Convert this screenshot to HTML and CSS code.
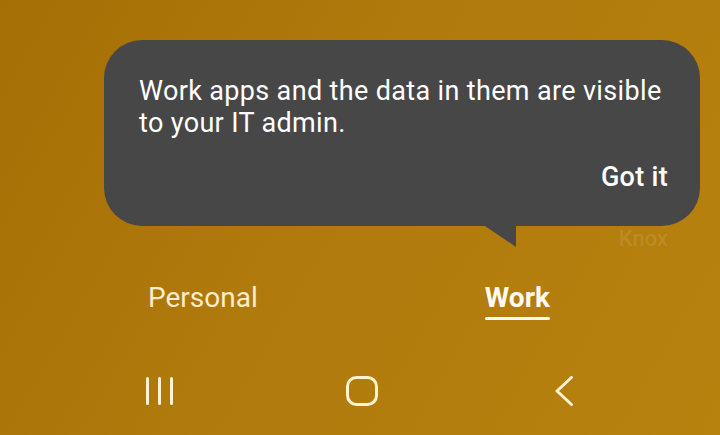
FILE: index.html
```html
<!DOCTYPE html>
<html lang="en">
<head>
    <meta charset="UTF-8">
    <meta name="viewport" content="width=device-width, initial-scale=1.0">
    <title>Work profile</title>
    <link rel="stylesheet" href="styles.css">
</head>
<body>
    <div class="screen">
        <div class="tip">
            <div class="bubble">
                <p class="msg">Work apps and the data in them are visible to your IT admin.</p>
                <div class="actions">
                    <span class="got">Got it</span>
                </div>
            </div>
            <div class="tipFoot">
                <span class="knox">Knox</span>
            </div>
        </div>

        <div class="tabs">
            <div class="tab">Personal</div>
            <div class="tab active">Work</div>
        </div>

        <div class="navBar">
            <div class="navBtn">
                <svg width="28" height="28" viewBox="0 0 28 28">
                    <path d="M1.5 1.5V26.5M13.5 1.5V26.5M25.5 1.5V26.5" />
                </svg>
            </div>
            <div class="navBtn">
                <svg width="32" height="30" viewBox="0 0 32 30">
                    <rect x="1.5" y="1.5" width="29" height="27" rx="9" />
                </svg>
            </div>
            <div class="navBtn">
                <svg width="20" height="30" viewBox="0 0 20 30">
                    <path d="M17.5 1.5L3 15L17.5 28.5" />
                </svg>
            </div>
        </div>
    </div>
</body>
</html>
```

FILE: styles.css
```css
/* Reset */
* {
    margin: 0;
    padding: 0;
    box-sizing: border-box;
}

body {
    font-family: Roboto, "Liberation Sans", sans-serif;
    width: 720px;
    height: 435px;
    overflow: hidden;
}

/* Wallpaper */
.screen {
    height: 435px;
    background: linear-gradient(120deg, #a66f05 0%, #b07a0d 45%, #b8820f 100%);
    display: flex;
    flex-direction: column;
}

/* Tooltip bubble */
.tip {
    padding: 40px 20px 0 104px;
}

.bubble {
    position: relative;
    background-color: #474747;
    border-radius: 38px;
    padding: 35px 32px 33px 35px;
    color: #ffffff;
}

/* the little tail under the bubble */
.bubble::after {
    content: "";
    position: absolute;
    left: 381px;
    top: 100%;
    width: 31px;
    height: 21px;
    background-color: #474747;
    clip-path: polygon(0 0, 100% 0, 100% 100%);
}

.msg {
    font-size: 27px;
    line-height: 32px;
    letter-spacing: 0.35px;
    padding-right: 4px;
}

.actions {
    display: flex;
    justify-content: flex-end;
    margin-top: 22px;
}

.got {
    font-size: 27px;
    line-height: 32px;
    font-weight: 500;
    letter-spacing: 0.3px;
}

.tipFoot {
    display: flex;
    justify-content: flex-end;
    padding: 1px 32px 0 0;
}

.knox {
    font-size: 22px;
    line-height: 23px;
    font-weight: 500;
    color: rgba(255, 255, 255, 0.1);
}

/* Personal / Work tabs */
.tabs {
    display: flex;
    gap: 227px;
    padding-left: 148px;
    margin-top: 32px;
}

.tab {
    font-size: 28px;
    line-height: 32px;
    color: #fbeccb;
}

.tab.active {
    font-weight: 700;
    color: #fffaf0;
}

.tab.active::after {
    content: "";
    display: block;
    height: 3px;
    margin-top: 3px;
    border-radius: 2px;
    background-color: #fffaf0;
}

/* Bottom navigation */
.navBar {
    display: flex;
    justify-content: center;
    align-items: center;
    gap: 142px;
    padding-left: 3px;
    margin-top: 43px;
    height: 56px;
}

.navBtn {
    width: 60px;
    display: flex;
    justify-content: center;
}

.navBtn svg {
    fill: none;
    stroke: #fff3d4;
    stroke-width: 3;
    stroke-linecap: round;
    stroke-linejoin: round;
}
```
